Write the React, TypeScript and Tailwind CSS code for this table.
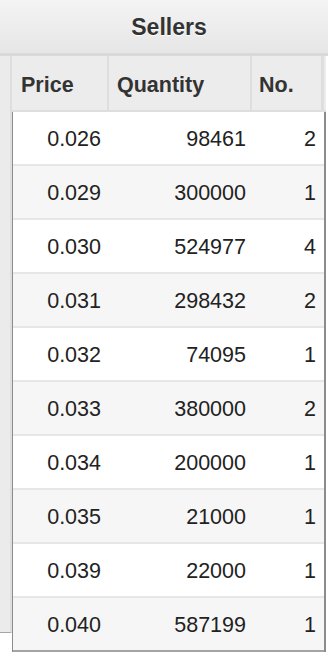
const rows = [
  { price: '0.026', qty: '98461', no: '2' },
  { price: '0.029', qty: '300000', no: '1' },
  { price: '0.030', qty: '524977', no: '4' },
  { price: '0.031', qty: '298432', no: '2' },
  { price: '0.032', qty: '74095', no: '1' },
  { price: '0.033', qty: '380000', no: '2' },
  { price: '0.034', qty: '200000', no: '1' },
  { price: '0.035', qty: '21000', no: '1' },
  { price: '0.039', qty: '22000', no: '1' },
  { price: '0.040', qty: '587199', no: '1' },
];

export default function App() {
  return (
    <div className="w-[328px] h-[654px] bg-white overflow-hidden font-['Liberation_Sans',Arial,sans-serif] text-[#222]">
      {/* Title bar */}
      <div className="h-[56px] flex items-center justify-center pl-[12px] pr-[2px] pt-[1px] bg-gradient-to-b from-[#f4f4f4] to-[#e6e6e6] border-b-[3px] border-[#d9d9d9]">
        <span className="text-[23px] font-bold text-[#333] [text-shadow:0_1px_0_#ffffff]">Sellers</span>
      </div>

      <div className="flex">
        {/* Left gutter */}
        <div className="w-[12px] shrink-0 flex flex-col">
          <div className="h-[577px] bg-[#ebebeb] border-r-2 border-[#dedede] border-b border-b-[#a6a6a6]" />
        </div>

        {/* Table */}
        <div className="w-[314px] shrink-0 flex flex-col">
          {/* Header row */}
          <div className="flex h-[56px] bg-[#ececec] border-b-2 border-[#dedede] text-[21.5px] font-bold text-[#333]">
            <div className="w-[97px] border-r-2 border-[#dedede] flex items-center pl-[9px] pt-[5px]">Price</div>
            <div className="w-[143px] border-r-2 border-[#dedede] flex items-center pl-[8px] pt-[5px]">Quantity</div>
            <div className="w-[72px] border-r-[3px] border-[#dedede] flex items-center pl-[7px] pt-[5px]">No.</div>
          </div>

          {/* Body */}
          <div className="flex flex-col w-[314px] border-l border-r-2 border-[#8c8c8c] text-[21.5px]">
            {rows.map((r, i) => (
              <div
                key={r.price}
                className={`flex h-[54px] pt-[3px] border-b-2 ${i === rows.length - 1 ? 'border-[#a3a3a3]' : 'border-[#e6e6e6]'} ${i % 2 === 0 ? 'bg-white' : 'bg-[#f6f6f6]'}`}
              >
                <div className="w-[96px] flex items-center justify-end pr-[8px]">{r.price}</div>
                <div className="w-[145px] flex items-center justify-end pr-[8px]">{r.qty}</div>
                <div className="w-[70px] flex items-center justify-end pr-[8px]">{r.no}</div>
              </div>
            ))}
          </div>
        </div>
      </div>
    </div>
  );
}
